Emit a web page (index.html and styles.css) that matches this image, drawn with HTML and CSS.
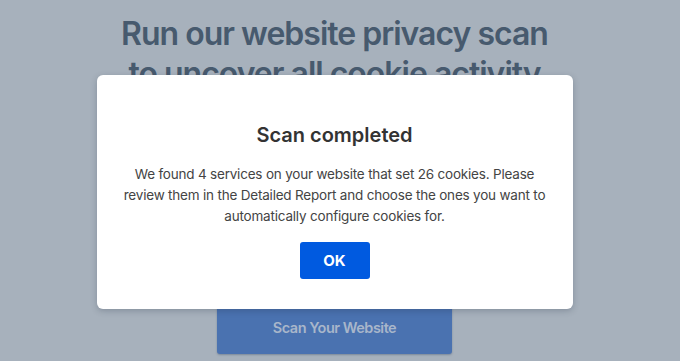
FILE: index.html
```html
<!DOCTYPE html>
<html lang="en">
<head>
<meta charset="utf-8">
<title>Scan completed</title>
<link rel="stylesheet" href="styles.css">
</head>
<body>
<main class="page">
  <h1 class="hero-title">Run our website privacy scan<br>to uncover all cookie activity</h1>
  <div class="hero-spacer"></div>
  <button class="scan-btn" type="button">Scan Your Website</button>
</main>
<div class="overlay">
  <div class="modal" role="dialog" aria-labelledby="modal-title">
    <h2 class="modal-title" id="modal-title">Scan completed</h2>
    <p class="modal-text">We found 4 services on your website that set 26 cookies. Please review them in the Detailed Report and choose the ones you want to automatically configure cookies for.</p>
    <button class="ok-btn" type="button">OK</button>
  </div>
</div>
</body>
</html>
```

FILE: styles.css
```css
* { box-sizing: border-box; }
html, body { margin: 0; padding: 0; }
html { background: #a7b1bc; }
body {
  width: 669px;
  height: 361px;
  overflow: hidden;
  background: #a7b1bc;
  font-family: Inter, "Noto Sans", "Liberation Sans", sans-serif;
  position: relative;
}
.page {
  display: flex;
  flex-direction: column;
  align-items: center;
  padding-top: 14px;
}
.hero-title {
  margin: 0;
  font-size: 32px;
  line-height: 40px;
  font-weight: 600;
  letter-spacing: -1px;
  color: #475a6e;
  text-align: center;
}
.hero-spacer { height: 206px; }
.scan-btn {
  width: 235px;
  height: 54px;
  border: none;
  border-radius: 3px;
  background: #4a72b0;
  color: #a8b6ca;
  font-family: inherit;
  font-size: 14.5px;
  font-weight: 600;
  letter-spacing: -0.5px;
  box-shadow: 0 1px 2px rgba(40, 60, 90, 0.35);
}
.overlay {
  position: absolute;
  inset: 0;
  display: flex;
  justify-content: center;
  align-items: flex-start;
  padding-top: 75px;
}
.modal {
  width: 476px;
  background: #fff;
  border-radius: 6px;
  box-shadow: 0 2px 6px rgba(30, 45, 65, 0.25);
  padding: 48px 24px 30px;
  display: flex;
  flex-direction: column;
  align-items: center;
  text-align: center;
}
.modal-title {
  margin: 0;
  font-size: 20px;
  line-height: 24px;
  font-weight: 600;
  color: #333;
}
.modal-text {
  margin: 17px 0 0;
  font-size: 13.5px;
  line-height: 21px;
  letter-spacing: -0.2px;
  color: #444;
}
.ok-btn {
  margin-top: 15px;
  width: 70px;
  height: 37px;
  border: none;
  border-radius: 3px;
  background: #005ae0;
  color: #fff;
  font-family: inherit;
  font-size: 15px;
  font-weight: 700;
}
```
